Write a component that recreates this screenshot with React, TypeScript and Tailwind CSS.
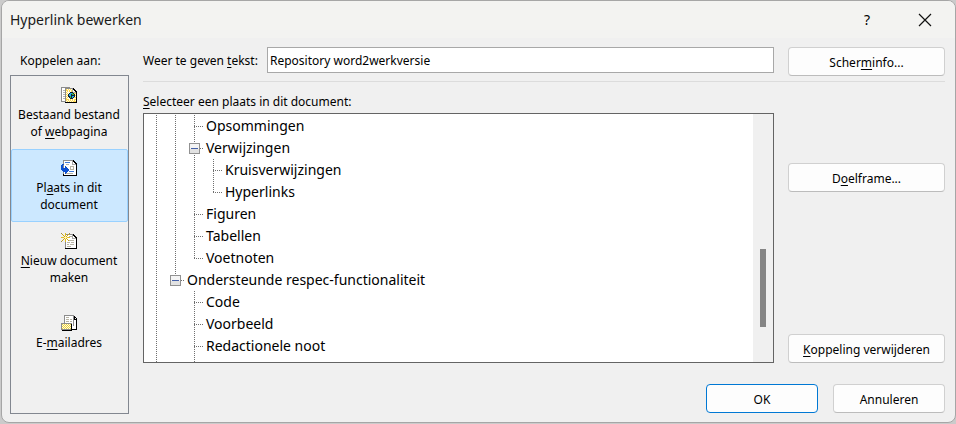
import React, { useState } from "react";

type Cell = "line" | "tee" | "elbow" | "blank" | "boxMid" | "boxLast";

const rows: { cells: Cell[]; text: string }[] = [
  { cells: ["line", "line", "tee"], text: "Opsommingen" },
  { cells: ["line", "line", "boxMid"], text: "Verwijzingen" },
  { cells: ["line", "line", "line", "tee"], text: "Kruisverwijzingen" },
  { cells: ["line", "line", "line", "elbow"], text: "Hyperlinks" },
  { cells: ["line", "line", "tee"], text: "Figuren" },
  { cells: ["line", "line", "tee"], text: "Tabellen" },
  { cells: ["line", "line", "elbow"], text: "Voetnoten" },
  { cells: ["line", "boxLast"], text: "Ondersteunde respec-functionaliteit" },
  { cells: ["line", "blank", "tee"], text: "Code" },
  { cells: ["line", "blank", "tee"], text: "Voorbeeld" },
  { cells: ["line", "blank", "tee"], text: "Redactionele noot" },
  { cells: ["line", "blank", "line"], text: "" },
];

function Connector({ kind }: { kind: Cell }) {
  const box = kind === "boxMid" || kind === "boxLast";
  const bottom = kind === "elbow" || kind === "boxLast" ? 12 : 22;
  const art = (
    <svg width="19" height="22" shapeRendering="crispEdges" className="block" aria-hidden="true">
      {kind !== "blank" && (
        <path d={`M9.5 0V${bottom}`} stroke="#707070" strokeDasharray="1 1" />
      )}
      {kind !== "blank" && kind !== "line" && (
        <path d="M9 11.5H18" stroke="#707070" strokeDasharray="1 1" />
      )}
      {box && (
        <>
          <rect x="4.5" y="6.5" width="10" height="10" fill="#f4f4f4" stroke="#919191" />
          <rect x="5" y="12" width="9" height="4" fill="#e2e2e2" />
          <path d="M6 11.5H13" stroke="#4460a8" />
        </>
      )}
    </svg>
  );
  return box ? (
    <button type="button" aria-label="Samenvouwen" className="shrink-0">{art}</button>
  ) : (
    <span className="shrink-0">{art}</span>
  );
}

function Page({ left = 3, fill = "#fff" }: { left?: number; fill?: string }) {
  return (
    <>
      <path d={`M${left} 1H12V2H13V3H14V4H15V15H${left}Z`} fill={fill} />
      <path d={`M${left + 0.5} 15V1.5H12`} fill="none" stroke="#8c8c8c" />
      <path d="M11.5 2V5M11 5.5H15" fill="none" stroke="#a8a8a8" />
      <path d={`M${left} 15.5H16M15.5 4V16`} fill="none" stroke="#000" />
      <path d="M12 1h1v1h1v1h1v1h1v1h-2v-1h-1v-1h-1z" fill="#000" />
    </>
  );
}

function IconFile() {
  return (
    <svg width="16" height="16" shapeRendering="crispEdges" aria-hidden="true">
      <path d="M0 0H9V14H0Z" fill="#fff" />
      <path d="M0.5 14V0.5H9M0 14.5H4" fill="none" stroke="#8c8c8c" />
      <path d="M2 3.5H4M2 5.5H4M2 7.5H4M2 9.5H4M2 11.5H4" stroke="#b4b4b4" />
      <Page left={4} fill="#fffbe4" />
      <path d="M5 2.5H11M6 4.5H11M5 12.5H15M6 14.5H15M5.5 3V15M13.5 6V15" fill="none" stroke="#ffd84a" strokeDasharray="1 1" />
      <path d="M6 3.5H11M5 13.5H15M6.5 4V14M14.5 6V15" fill="none" stroke="#ffd84a" strokeDasharray="1 1" />
      <path d="M8 6h1v-1h3v1h1v1h1v3h-1v1h-1v1h-3v-1h-1v-1h-1v-3h1z" fill="#102030" />
      <path d="M9 6h2v1h-1v2h-2v-2h1zM11 9h2v1h-1v1h-1z" fill="#20a8f0" />
      <path d="M11 6h1v1h1v1h-2zM9 9h1v2h-1z" fill="#38b848" />
    </svg>
  );
}

function IconPlace() {
  return (
    <svg width="16" height="16" shapeRendering="crispEdges" aria-hidden="true">
      <g transform="translate(0 -1)">
        <Page left={2} />
      </g>
      <path d="M2 15.5H16M15.5 13V16" stroke="#000" />
      <path d="M3 14.5H15" stroke="#fff" />
      <path d="M4 2.5H9M8 11.5H13" stroke="#3c78d8" />
      <path d="M9 6.5H13M9 9.5H13M9.5 6V10M12.5 6V10M5 4.5H8M5 13.5H12" stroke="#b8b4a4" fill="none" />
      <path d="M1 4h2v1h-1v3h2v-2h1v1h1v1h1v1h1v2h-1v1h-1v1h-1v1h-1v-2h-2v-1h-1v-1h-1v-5h1z" fill="#0c50d0" />
    </svg>
  );
}

function IconNew() {
  return (
    <svg width="16" height="16" shapeRendering="crispEdges" aria-hidden="true">
      <Page left={4} />
      <path d="M8 3.5H11M8 7.5H13M6 9.5H9M10 9.5H13M6 11.5H8M9 11.5H13M6 13.5H10" stroke="#b8b4a4" />
      <path d="M3 3h3v3h-3z" fill="#fff4b0" />
      <path d="M4.5 0V3M4.5 6V9M0 4.5H3M6 4.5H9" stroke="#e0bc20" fill="none" />
      <path d="M1 1h1v1h-1zM2 2h1v1h-1zM3 3h1v1h-1zM7 1h1v1h-1zM6 2h1v1h-1zM5 3h1v1h-1zM3 5h1v1h-1zM2 6h1v1h-1zM1 7h1v1h-1zM5 5h1v1h-1zM6 6h1v1h-1zM7 7h1v1h-1z" fill="#d0a810" />
      <path d="M0 0h1v1H0zM8 0h1v1H8zM0 8h1v1H0z" fill="#a08c40" />
    </svg>
  );
}

function IconMail() {
  return (
    <svg width="16" height="16" shapeRendering="crispEdges" aria-hidden="true">
      <path d="M9 2H14V4H15V14H9Z" fill="#fff" />
      <path d="M11 14.5H16M15.5 3V15M13 1.5H14M14 2.5H15M13.5 2V4M13 4.5H15" stroke="#000" fill="none" />
      <path d="M3 0H12V10H3Z" fill="#fff" />
      <path d="M3.5 8V0.5H12.5V11" stroke="#8c8c8c" fill="none" />
      <path d="M5 2.5H8M5 4.5H8M5 6.5H8M9 4.5H11M9 6.5H11" stroke="#b8b4a4" />
      <rect x="0.5" y="8.5" width="10" height="6" fill="#fffbe0" stroke="#8c8c8c" />
      <path d="M1 9.5H10M1 11.5H10M1 13.5H10M2 10.5H10M2 12.5H10" stroke="#ecd23c" strokeDasharray="1 1" />
      <path d="M1 15.5H11M10.5 9V15" stroke="#000" />
    </svg>
  );
}

const U = ({ children }: { children: React.ReactNode }) => (
  <span className="underline underline-offset-2">{children}</span>
);

const places = [
  { icon: <IconFile />, label: <>Bestaand bestand<br />of <U>w</U>ebpagina</> },
  { icon: <IconPlace />, label: <>Pl<U>a</U>ats in dit<br />document</> },
  { icon: <IconNew />, label: <><U>N</U>ieuw document<br />maken</> },
  { icon: <IconMail />, label: <>E-<U>m</U>ailadres</> },
];

function PushButton({ children, primary }: { children: React.ReactNode; primary?: boolean }) {
  return (
    <button
      type="button"
      className={`h-[29px] w-full rounded border bg-[#fdfdfd] pt-0.5 text-center ${
        primary ? "border-[#0078d4]" : "border-[#d0d0d0] border-b-[#bcbcbc]"
      }`}
    >
      {children}
    </button>
  );
}

export default function App() {
  const [selected, setSelected] = useState(1);
  const [text, setText] = useState("Repository word2werkversie");
  return (
    <div className="min-h-screen bg-[#cbcbcb] pl-px font-['Noto_Sans','Open_Sans',sans-serif] text-xs leading-[17px] text-black">
      <div role="dialog" aria-labelledby="title" className="overflow-hidden rounded-lg border border-[#a6a6a6] bg-[#f0f0f0]">
        <header className="flex h-[37px] items-center bg-[#f3f3f1] pl-2 pr-[23px] pt-px">
          <h1 id="title" className="flex-1 text-sm text-[#1a1a1a]">Hyperlink bewerken</h1>
          <button type="button" aria-label="Help" className="mr-[43px] w-4 text-sm">?</button>
          <button type="button" aria-label="Sluiten">
            <svg width="14" height="14" aria-hidden="true">
              <path d="M1 1L13 13M13 1L1 13" stroke="#111" strokeWidth="1.2" />
            </svg>
          </button>
        </header>
        <div className="flex gap-3.5 pb-2 pl-2 pr-2.5">
          <nav className="flex w-[119px] shrink-0 flex-col" aria-labelledby="link-to">
            <p id="link-to" className="h-[37px] pl-2.5 pt-3.5">Koppelen aan:</p>
            <div className="flex-1 border border-[#828790]">
              {places.map((p, i) => (
                <button
                  key={i}
                  type="button"
                  aria-pressed={i === selected}
                  onClick={() => setSelected(i)}
                  className={`flex h-[73px] w-full flex-col items-center justify-center gap-[3px] rounded-xs border pr-px pt-0.5 ${
                    i === selected ? "border-[#99d1ff] bg-[#cce8ff]" : "border-transparent"
                  }`}
                >
                  {p.icon}
                  <span className="whitespace-nowrap">{p.label}</span>
                </button>
              ))}
            </div>
          </nav>
          <main className="min-w-0 flex-1 pb-px pt-[9px]">
            <div className="flex gap-3.5 pb-[5px]">
              <div className="flex flex-1 items-start">
                <label htmlFor="display" className="w-[124px] shrink-0 whitespace-nowrap pt-[5px]">
                  Weer te geven <U>t</U>ekst:
                </label>
                <input
                  id="display"
                  value={text}
                  onChange={(e) => setText(e.target.value)}
                  className="h-[26px] min-w-0 flex-1 border border-[#a8a8a8] bg-white px-0.5 outline-none"
                />
              </div>
              <div className="w-[157px]">
                <PushButton>Scher<U>m</U>info...</PushButton>
              </div>
            </div>
            <div className="h-px bg-[#dcdcdc]" />
            <p id="tree-label" className="h-[31px] pt-[11px]"><U>S</U>electeer een plaats in dit document:</p>
            <div className="flex gap-3.5">
              <div className="flex h-[250px] flex-1 overflow-hidden border border-[#646464] bg-white">
                <ul role="tree" aria-labelledby="tree-label" className="flex-1 pl-[3px] pt-px text-sm">
                  {rows.map((r, i) => (
                    <li key={i} role="treeitem" className="flex h-[22px] items-center">
                      {r.cells.map((c, j) => <Connector key={j} kind={c} />)}
                      <span className="pl-0.5">{r.text}</span>
                    </li>
                  ))}
                </ul>
                <div className="flex w-5 justify-center bg-[#f0f0f0] pt-[135px]">
                  <div className="h-[78px] w-1.5 bg-[#858585]" />
                </div>
              </div>
              <div className="flex w-[157px] flex-col justify-between pt-[50px]">
                <PushButton>D<U>o</U>elframe...</PushButton>
                <PushButton><U>K</U>oppeling verwijderen</PushButton>
              </div>
            </div>
            <div className="flex justify-end gap-[15px] pt-[21px]">
              <div className="w-28"><PushButton primary>OK</PushButton></div>
              <div className="w-28"><PushButton>Annuleren</PushButton></div>
            </div>
          </main>
        </div>
      </div>
    </div>
  );
}
